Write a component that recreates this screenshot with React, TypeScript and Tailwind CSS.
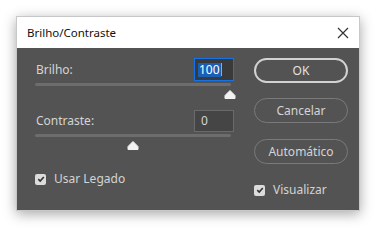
import React from "react";

const font = { fontFamily: '"Noto Sans", "Open Sans", sans-serif' };

function Thumb() {
  return (
    <svg width="12" height="9" viewBox="0 0 12 9" className="block">
      <path d="M6 0.5 L11 5.5 L11 8.5 L1 8.5 L1 5.5 Z" fill="#f2f2f2" stroke="#f2f2f2" strokeLinejoin="round" />
    </svg>
  );
}

function Check() {
  return (
    <div className="w-[11px] h-[11px] rounded-[2px] bg-[#dcdcdc] flex items-center justify-center">
      <svg width="8" height="8" viewBox="0 0 8 8">
        <path d="M1.3 4.2 L3.2 6 L6.8 2" fill="none" stroke="#333" strokeWidth="1.6" />
      </svg>
    </div>
  );
}

export default function App() {
  return (
    <div className="w-[377px] h-[228px] bg-white pl-[16px] pt-[16px]" style={font}>
      <div className="w-[344px] h-[195px] border border-[#c8c8c8] shadow-[0_3px_12px_rgba(0,0,0,0.35)] flex flex-col">
        <div className="h-[31px] bg-white flex items-center justify-between pl-[10px] pr-[10px] shrink-0">
          <span className="text-[11.5px] text-[#111] leading-none">Brilho/Contraste</span>
          <svg width="12" height="12" viewBox="0 0 12 12">
            <path d="M1 1 L11 11 M11 1 L1 11" stroke="#333" strokeWidth="1.2" />
          </svg>
        </div>
        <div className="flex-1 bg-[#535353] flex pl-[18px] pt-[10px] text-[#d4d4d4] text-[12px]">
          <div className="w-[199px] flex flex-col">
            <div className="h-[23px] flex items-center justify-between">
              <span className="leading-none pl-[1px]">Brilho:</span>
              <div className="w-[40px] h-[23px] border border-[#1473e6] bg-[#3a3a3a] flex items-center pl-[3px]">
                <span className="bg-[#1a5fb4] text-white leading-[14px] px-[1px]">100</span>
                <span className="w-[1px] h-[13px] bg-[#e0a040]" />
              </div>
            </div>
            <div className="h-[3px] mt-[2px] bg-[#6d6d6d] rounded-full w-[196px]" />
            <div className="h-[9px] mt-[4px] relative">
              <div className="absolute left-[189px] top-0"><Thumb /></div>
            </div>
            <div className="h-[23px] mt-[10px] flex items-center justify-between">
              <span className="leading-none pl-[1px]">Contraste:</span>
              <div className="w-[40px] h-[22px] border border-[#6a6a6a] bg-[#454545] flex items-center pl-[6px]">
                <span className="leading-none">0</span>
              </div>
            </div>
            <div className="h-[3px] mt-[2px] bg-[#6d6d6d] rounded-full w-[196px]" />
            <div className="h-[9px] mt-[4px] relative">
              <div className="absolute left-[92px] top-0"><Thumb /></div>
            </div>
            <div className="flex items-center gap-[8px] mt-[23px]">
              <Check />
              <span className="leading-none">Usar Legado</span>
            </div>
          </div>
          <div className="ml-[20px] w-[94px] flex flex-col">
            <div className="h-[25px] rounded-full border-2 border-[#d2d2d2] flex items-center justify-center">
              <span className="leading-none text-[#e2e2e2]">OK</span>
            </div>
            <div className="h-[25px] mt-[15px] rounded-full border border-[#7a7a7a] flex items-center justify-center">
              <span className="leading-none">Cancelar</span>
            </div>
            <div className="h-[25px] mt-[16px] rounded-full border border-[#7a7a7a] flex items-center justify-center">
              <span className="leading-none">Automático</span>
            </div>
            <div className="flex items-center gap-[8px] mt-[20px]">
              <Check />
              <span className="leading-none">Visualizar</span>
            </div>
          </div>
        </div>
      </div>
    </div>
  );
}
